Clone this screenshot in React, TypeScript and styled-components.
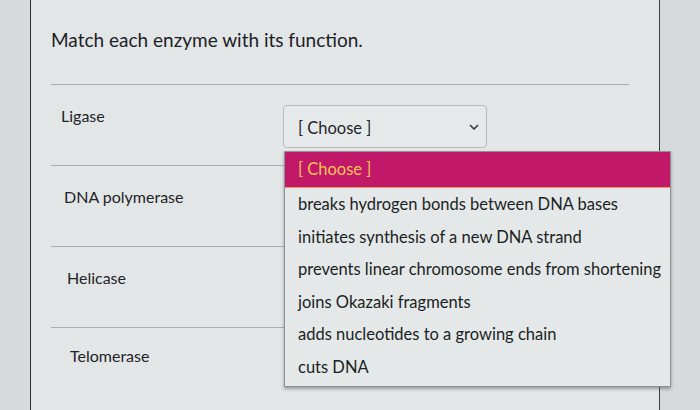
import styled, { createGlobalStyle } from "styled-components"

const GlobalStyle = createGlobalStyle`
    body{
        margin: 0;
        background: #d6dadc;
        font-family: Lato, "Open Sans", sans-serif;
        color: #1e262b;
    }
`

const enzymes = ["Ligase", "DNA polymerase", "Helicase", "Telomerase"]

const options = [
    "breaks hydrogen bonds between DNA bases",
    "initiates synthesis of a new DNA strand",
    "prevents linear chromosome ends from shortening",
    "joins Okazaki fragments",
    "adds nucleotides to a growing chain",
    "cuts DNA",
]

// COMPONENT // // COMPONENT // // COMPONENT //
const App = () => {
    return (
        <Page>
            <GlobalStyle />
            <Card>
                <Title>Match each enzyme with its function.</Title>
                <Rows>
                    {enzymes.map((name, i) => (
                        <Row key={name} $shift={i * 3}>
                            <Label>{name}</Label>
                            <SelectCell>
                                {i === 0 && (
                                    <>
                                        <SelectBox>
                                            <span>[ Choose ]</span>
                                            <svg width="10" height="6" viewBox="0 0 10 6">
                                                <path d="M1 1l4 4l4-4" fill="none" stroke="#333" strokeWidth="1.5" />
                                            </svg>
                                        </SelectBox>
                                        <ListBox>
                                            <Option $active>[ Choose ]</Option>
                                            {options.map(o => (
                                                <Option key={o}>{o}</Option>
                                            ))}
                                        </ListBox>
                                    </>
                                )}
                            </SelectCell>
                        </Row>
                    ))}
                </Rows>
            </Card>
        </Page>
    )
}

export default App

// STYLESHEET // // STYLESHEET // // STYLESHEET //
const Page = styled.div`
    width: 700px;
    height: 410px;
    overflow: hidden;
`

const Card = styled.section`
    margin-left: 30px;
    width: 578px;
    height: 410px;
    padding: 0 30px 0 20px;
    background: #e3e6e7;
    border-left: 1px solid #2c2f31;
    border-right: 1px solid #3a3e41;
`

const Title = styled.h1`
    margin: 0;
    padding: 28px 0 32px;
    font-size: 19px;
    font-weight: 400;
    line-height: 24px;
    color: #1b2126;
`

const Rows = styled.div`
    display: flex;
    flex-direction: column;
`

const Row = styled.div<{ $shift: number }>`
    display: grid;
    grid-template-columns: 232px 1fr;
    height: 80px;
    border-top: 1px solid #a9adb0;
    padding-left: ${p => 10 + p.$shift}px;
    &:first-child{
        padding-left: 10px;
    }
    &:last-child > div:first-child{
        padding-top: 18px;
    }
`

const Label = styled.div`
    padding-top: 21px;
    font-size: 16px;
    line-height: 20px;
    color: #1e2428;
`

const SelectCell = styled.div`
    position: relative;
    padding-top: 20px;
`

const SelectBox = styled.div`
    display: flex;
    align-items: center;
    justify-content: space-between;
    width: 204px;
    height: 43px;
    box-sizing: border-box;
    margin-left: -10px;
    padding: 0 7px 0 14px;
    border: 1px solid #b7bbbe;
    border-radius: 4px;
    background: #e6e9ea;
    font-size: 16.5px;
    color: #1e2428;
    span{
        padding-top: 2px;
    }
`

const ListBox = styled.ul`
    position: absolute;
    top: 66px;
    left: -9px;
    width: 385px;
    margin: 0;
    padding: 0 0 3px;
    list-style: none;
    background: #e5e8e9;
    border: 1px solid #8d9295;
    box-shadow: 0 2px 3px rgba(60, 66, 70, 0.45);
    z-index: 2;
`

const Option = styled.li<{ $active?: boolean }>`
    height: ${p => (p.$active ? 35 : 32.5)}px;
    line-height: ${p => (p.$active ? 35 : 32.5)}px;
    padding-left: 13px;
    font-size: 16.5px;
    white-space: nowrap;
    color: ${p => (p.$active ? "#f7c352" : "#1a1f23")};
    background: ${p => (p.$active ? "#c2186a" : "transparent")};
    border-bottom: ${p => (p.$active ? "1px solid #e89a5c" : "none")};
`
